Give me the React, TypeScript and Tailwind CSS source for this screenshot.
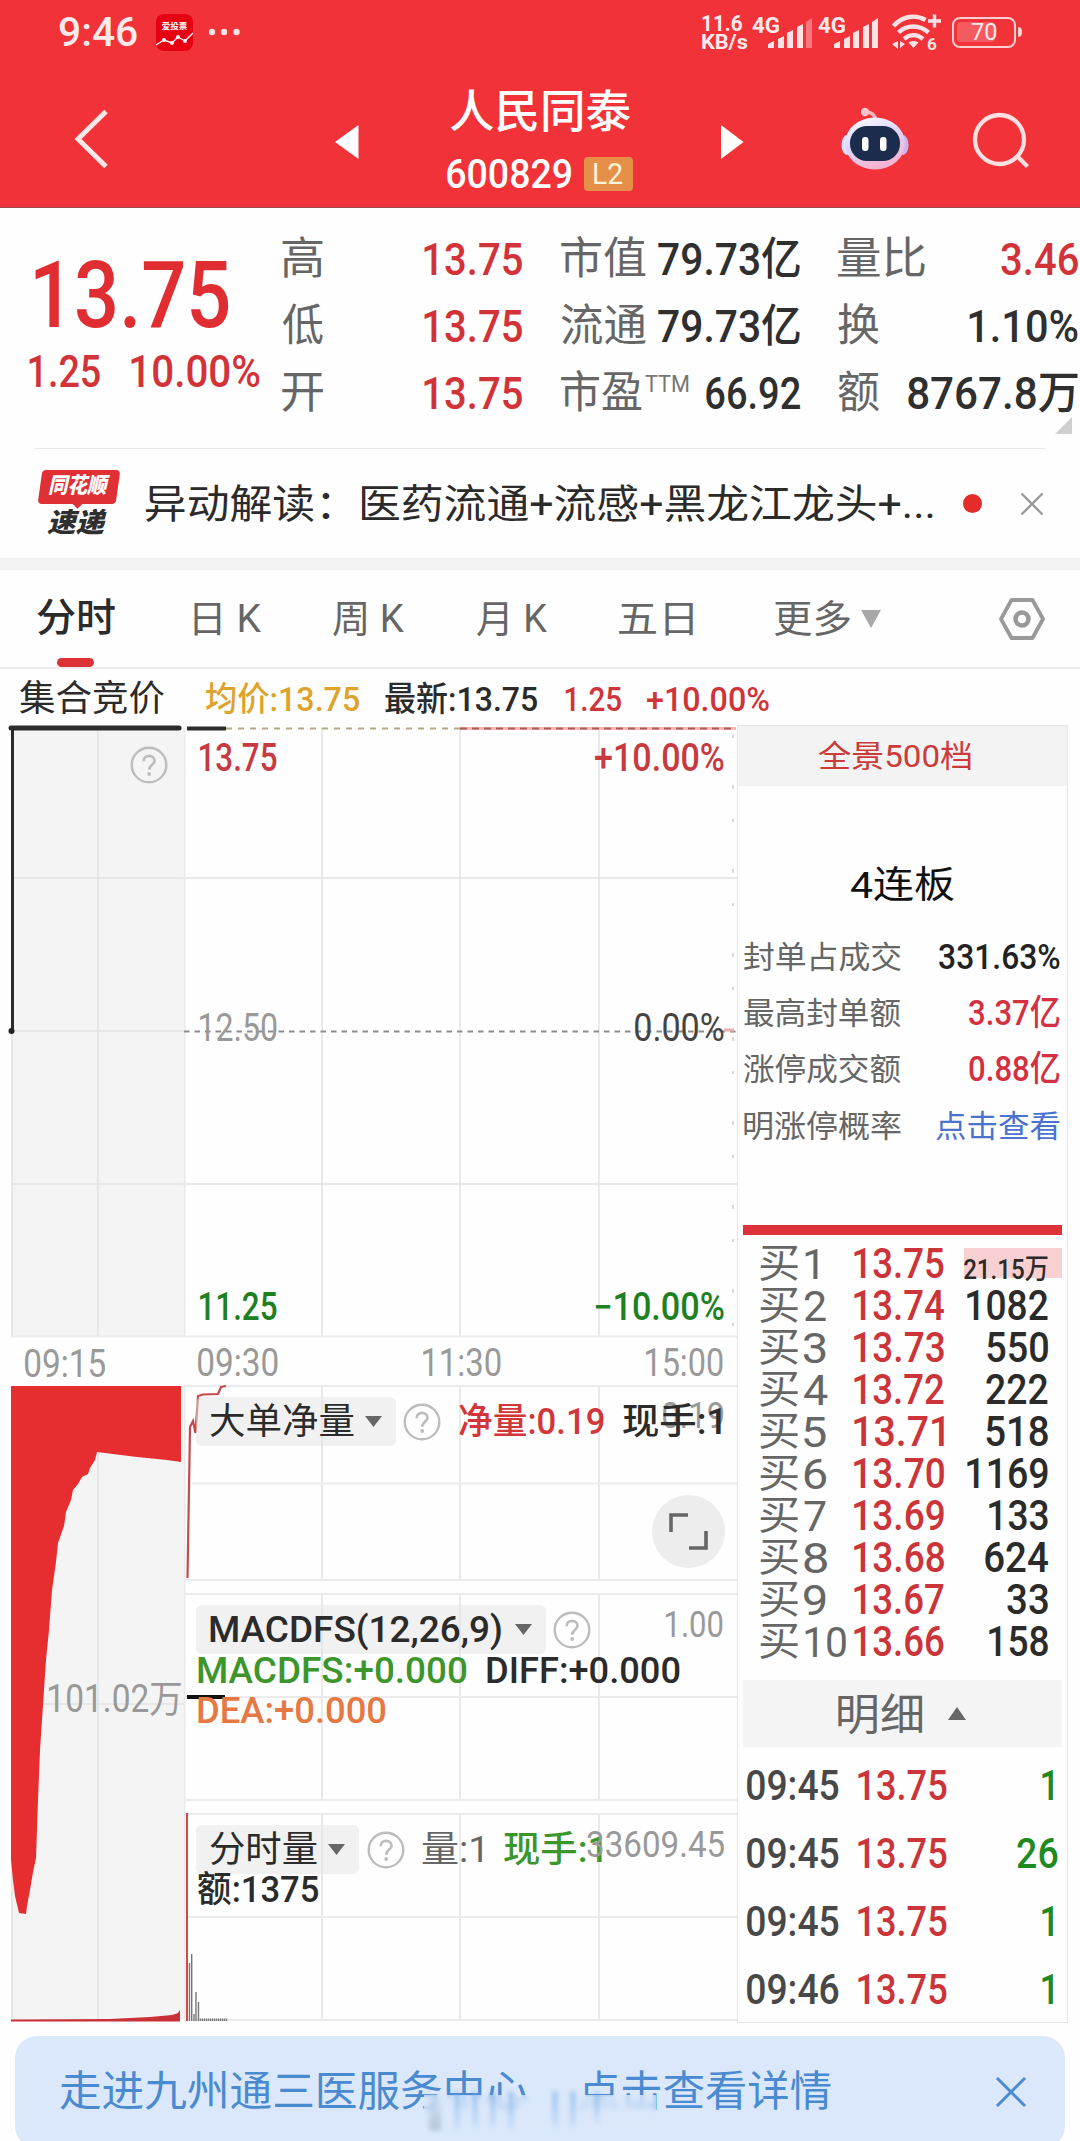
import { useLayoutEffect, useRef } from "react";
import type { ReactNode } from "react";

/* Text whose inked width is fitted to the box it stands in, giving condensed figures. */
function Fit({ children, className = "" }: { children: string; className?: string }) {
  const box = useRef<HTMLSpanElement>(null);
  const ink = useRef<HTMLSpanElement>(null);
  useLayoutEffect(() => {
    const b = box.current;
    const t = ink.current;
    if (!b || !t) return;
    const s = getComputedStyle(t);
    const ctx = document.createElement("canvas").getContext("2d");
    if (!ctx) return;
    ctx.font = `${s.fontStyle} ${s.fontWeight} ${s.fontSize} ${s.fontFamily}`;
    const m = ctx.measureText(children);
    const k = b.clientWidth / (m.actualBoundingBoxLeft + m.actualBoundingBoxRight);
    t.style.transform = `translateX(${m.actualBoundingBoxLeft * k}px) scaleX(${k})`;
  }, [children]);
  return (
    <span ref={box} className={`block shrink-0 leading-none ${className}`}>
      <span ref={ink} className="block w-max origin-left whitespace-pre">
        {children}
      </span>
    </span>
  );
}

function Help({ className = "" }: { className?: string }) {
  return (
    <svg className={`size-[38px] shrink-0 ${className}`} viewBox="0 0 38 38" fill="none" stroke="#bdbdbd" strokeWidth="2.4">
      <circle cx="19" cy="19" r="17.3" />
      <path d="M13.6 15.2c0-3.4 2.4-5.4 5.5-5.4s5.4 2 5.4 4.9c0 4-5.3 4.4-5.3 9" strokeWidth="2.7" />
      <circle cx="19.2" cy="28" r="1.9" fill="#bdbdbd" stroke="none" />
    </svg>
  );
}

function Down({ className = "" }: { className?: string }) {
  return (
    <svg className={`h-[11px] w-[17px] shrink-0 ${className}`} viewBox="0 0 17 11">
      <path d="M0 0h17L8.500 11z" fill="#666" />
    </svg>
  );
}

function Signal({ weak = false, className = "" }: { weak?: boolean; className?: string }) {
  return (
    <div className={`relative h-[34px] w-[61px] shrink-0 ${className}`}>
      <Fit className="w-[27px] text-[22px] font-bold">4G</Fit>
      <svg className="absolute top-0 left-[16px] h-[34px] w-[46px]" viewBox="0 0 46 34" fill="#ffe3e4">
        <path d="M0 33v-4l6-3v7z" />
        <path d="M10 33V24l6-3v12z" />
        <path d="M19 33V18l6-3v18z" />
        <path d="M29 33V12l6-3v24z" />
        <path d="M38 33V7l6-4v30z" opacity={weak ? 0.4 : 1} />
      </svg>
    </div>
  );
}

function StatusBar() {
  return (
    <div className="flex h-16 items-center pl-[59px] text-[#ffe9ea]">
      <Fit className="w-[78px] text-[41px] font-medium">9:46</Fit>
      <svg className="ml-[19px] size-[37px]" viewBox="0 0 37 37">
        <rect width="37" height="37" rx="8" fill="#e60012" />
        <text x="18.500" y="15" textAnchor="middle" fontSize="8.500" fontWeight="700" fill="#fff" fontFamily="Noto Sans CJK SC">爱投票</text>
        <path d="M0 31l8-5 8 3 6-6 7 4 8-8" fill="none" stroke="#fff" strokeWidth="1.400" />
        <g fill="#fff"><circle cx="8" cy="26" r="1.900" /><circle cx="16" cy="29" r="1.900" /><circle cx="22" cy="23" r="1.900" /><circle cx="29" cy="27" r="1.900" /></g>
      </svg>
      <svg className="ml-[14px] h-[8px] w-[34px]" viewBox="0 0 34 8" fill="#ffe3e4">
        <circle cx="5" cy="4" r="3.200" /><circle cx="17" cy="4" r="3.200" /><circle cx="29.500" cy="4" r="3.200" />
      </svg>
      <div className="ml-[461px] flex w-[50px] flex-col pt-px">
        <Fit className="h-[19px] w-[40px] text-[22px] font-bold">11.6</Fit>
        <Fit className="w-[46px] text-[21px] font-bold">KB/s</Fit>
      </div>
      <Signal weak />
      <Signal className="ml-[5px]" />
      <svg className="ml-[12px] h-[38px] w-[52px]" viewBox="0 0 52 38" fill="none" stroke="#ffe3e4" strokeWidth="4.400">
        <path d="M2.500 13c9-10 22-12 32-6" />
        <path d="M7.500 19.500c8-8 21-8 30 0" />
        <path d="M13 26c6-5 13-5 19 0" />
        <path d="M22.500 35l-5-5.500c3-2 7-2 10 0z" fill="#ffe3e4" stroke="none" />
        <path d="M37 8h13M43.500 1.500v13" strokeWidth="3.400" />
        <path d="M1 31l6-3v8zM9 35v-7l5 3" fill="#ffe3e4" stroke="none" />
        <text x="36" y="37" fontSize="17" fontWeight="700" fill="#ffe3e4" stroke="none" fontFamily="Roboto">6</text>
      </svg>
      <div className="relative ml-[9px] flex h-[31px] w-[64px] items-center justify-center rounded-[8px] border-[2.5px] border-[#ffd0d2]">
        <span className="absolute top-[3px] left-[3px] h-[20px] w-[38px] rounded-[4px] bg-white/20" />
        <Fit className="relative w-[26px] text-[24px]">70</Fit>
      </div>
      <span className="ml-[2px] h-[10px] w-[4px] rounded-r bg-[#ffd0d2]" />
    </div>
  );
}

function NavBar() {
  return (
    <div className="flex h-36 items-center text-white">
      <svg className="ml-[72px] h-[64px] w-[38px] translate-y-[3px]" viewBox="0 0 38 64" fill="none" stroke="#ffe6e7" strokeWidth="5">
        <path d="M34 4.500L6 32l28 27.500" />
      </svg>
      <svg className="ml-[225px] h-[34px] w-[24px] translate-y-[6px]" viewBox="0 0 24 34"><path d="M23.500 0v34L0 17z" fill="#fff" /></svg>
      <div className="ml-[88px] flex w-[188px] flex-col items-start pt-[12px]">
        <Fit className="ml-[3px] w-[180px] text-[45px] font-medium">人民同泰</Fit>
        <div className="mt-[19px] flex items-center">
          <Fit className="w-[124px] text-[41px] font-medium">600829</Fit>
          <div className="ml-[13px] flex h-[34px] w-[49px] items-center justify-center rounded-[4px] bg-[#e58f48]">
            <Fit className="w-[29px] text-[29px] text-[#fff4d8]">L2</Fit>
          </div>
        </div>
      </div>
      <svg className="ml-[86px] h-[34px] w-[23px] translate-y-[6px]" viewBox="0 0 23 34"><path d="M0 0v34l22.500-17z" fill="#fff" /></svg>
      <svg className="ml-[97px] h-[64px] w-[68px] translate-y-[3px]" viewBox="0 0 68 64">
        <defs>
          <linearGradient id="shell" x1="0" y1="0" x2=".4" y2="1">
            <stop offset="0" stopColor="#fff" /><stop offset=".5" stopColor="#dcd8fb" /><stop offset="1" stopColor="#f5b4d2" />
          </linearGradient>
        </defs>
        <path d="M24 5c6 0 10 2 10.500 8" fill="none" stroke="#ffb6bf" strokeWidth="3.500" />
        <circle cx="24" cy="5" r="4.200" fill="#ffc3ca" />
        <ellipse cx="6" cy="38" rx="5.500" ry="10" fill="#dfe3ff" />
        <ellipse cx="62" cy="38" rx="5.500" ry="10" fill="#c3b7f4" />
        <ellipse cx="34" cy="36.500" rx="30" ry="26" fill="url(#shell)" />
        <rect x="9" y="19" width="50" height="35" rx="17" fill="#1c2c4c" />
        <rect x="21" y="30" width="6.500" height="14" rx="3" fill="#fff" />
        <rect x="39" y="30" width="6.500" height="14" rx="3" fill="#fff" />
      </svg>
      <svg className="ml-[63px] h-[58px] w-[60px] translate-y-[5px]" viewBox="0 0 60 58" fill="none" stroke="#ffdfe0" strokeWidth="4.300">
        <circle cx="27.500" cy="27.500" r="24.500" />
        <path d="M45.500 44.500l10 10" />
      </svg>
    </div>
  );
}

function Pair({ label, value, className, children }: { label: [string, string]; value: [string, string]; className: string; children?: ReactNode }) {
  return (
    <div className={`flex shrink-0 items-center ${className}`}>
      <Fit className={`mt-[2px] text-[44px] text-[#666] ${label[1]}`}>{label[0]}</Fit>
      {children}
      <Fit className={`mt-[3px] ml-auto text-[45px] font-medium ${value[1]}`}>{value[0]}</Fit>
    </div>
  );
}

function Quote() {
  const red = "text-[#d23338]";
  const ink = "text-[#2f2f2f]";
  return (
    <section className="relative flex h-[240px] shrink-0">
      <div className={`w-[282px] pt-[41px] ${red}`}>
        <Fit className="ml-[35px] w-[194px] text-[93px] font-medium text-[#e02d31]">13.75</Fit>
        <div className="mt-[7px] flex pl-[29px] font-medium">
          <Fit className="w-[71px] text-[45px]">1.25</Fit>
          <Fit className="ml-[31px] w-[129px] text-[45px]">10.00%</Fit>
        </div>
      </div>
      <div className="pt-[16px]">
        <div className="flex h-[67px] items-center">
          <Pair className="w-[240px]" label={["高", "w-[41px]"]} value={["13.75", `w-[98px] ${red}`]} />
          <Pair className="ml-[39px] w-[239px]" label={["市值", "w-[85px]"]} value={["79.73亿", `w-[142px] ${ink}`]} />
          <Pair className="ml-[38px] w-[240px]" label={["量比", "w-[87px]"]} value={["3.46", `w-[77px] ${red}`]} />
        </div>
        <div className="flex h-[67px] items-center">
          <Pair className="w-[240px]" label={["低", "w-[41px]"]} value={["13.75", `w-[98px] ${red}`]} />
          <Pair className="ml-[39px] w-[239px]" label={["流通", "w-[85px]"]} value={["79.73亿", `w-[142px] ${ink}`]} />
          <Pair className="ml-[38px] w-[240px]" label={["换", "w-[41px]"]} value={["1.10%", `w-[109px] ${ink}`]} />
        </div>
        <div className="flex h-[67px] items-center">
          <Pair className="w-[240px]" label={["开", "w-[41px]"]} value={["13.75", `w-[98px] ${red}`]} />
          <Pair className="ml-[39px] w-[239px]" label={["市盈", "w-[81px]"]} value={["66.92", `w-[94px] ${ink}`]}>
            <Fit className="mb-[14px] ml-[3px] w-[44px] text-[23px] text-[#777]">TTM</Fit>
          </Pair>
          <Pair className="ml-[38px] w-[240px]" label={["额", "w-[41px]"]} value={["8767.8万", `w-[170px] ${ink}`]} />
        </div>
      </div>
      <svg className="absolute right-[8px] bottom-[14px] size-[17px]" viewBox="0 0 17 17"><path d="M17 0v17H0z" fill="#cfcfcf" /></svg>
    </section>
  );
}

function News() {
  return (
    <section className="flex h-[109px] shrink-0 items-center pl-[38px]">
      <div className="w-[82px]">
        <div className="relative mx-[2px] h-[34px]">
          <span className="absolute inset-0 -skew-x-[8deg] rounded-[4px] bg-[#de3035]" />
          <span className="absolute bottom-[-3px] left-[33px] size-[9px] rotate-45 bg-[#de3035]" />
          <Fit className="relative ml-[8px] w-[62px] pt-[5px] text-[22px] font-black text-white italic">同花顺</Fit>
        </div>
        <Fit className="mt-[6px] ml-[9px] w-[60px] text-[27px] font-black text-[#2f2f2f] italic">速递</Fit>
      </div>
      <Fit className="mt-[3px] ml-[26px] w-[787px] text-[40px] text-[#2b2b2b]">异动解读：医药流通+流感+黑龙江龙头+...</Fit>
      <span className="ml-[30px] size-[19px] rounded-full bg-[#e62b2b]" />
      <svg className="ml-[38px] size-[24px]" viewBox="0 0 24 24" stroke="#999" strokeWidth="2.400"><path d="M1.500 1.500l21 21M22.500 1.500l-21 21" /></svg>
    </section>
  );
}

function Tabs() {
  return (
    <nav className="flex h-[99px] shrink-0 items-center border-b-2 border-[#ececec] text-[38px] text-[#666]">
      <div className="relative ml-[37px]">
        <Fit className="w-[78px] text-[39px] font-medium text-[#2b2b2b]">分时</Fit>
        <span className="absolute top-[59px] left-[20px] h-[9px] w-[37px] rounded-full bg-[#dc3236]" />
      </div>
      <Fit className="ml-[79px] w-[67px]">日 K</Fit>
      <Fit className="ml-[72px] w-[71px]">周 K</Fit>
      <Fit className="ml-[73px] w-[70px]">月 K</Fit>
      <Fit className="ml-[72px] w-[74px]">五日</Fit>
      <Fit className="ml-[81px] w-[76px]">更多</Fit>
      <svg className="ml-[11px] h-[18px] w-[20px]" viewBox="0 0 20 18"><path d="M0 0h20L10 18z" fill="#a8a8a8" /></svg>
      <svg className="ml-[118px] h-[44px] w-[46px]" viewBox="0 0 46 44" fill="none" stroke="#999" strokeWidth="3.800" strokeLinejoin="round">
        <path d="M12.500 3h21L44 22 33.500 41h-21L2 22z" />
        <circle cx="23" cy="22" r="6.500" strokeWidth="4.500" />
      </svg>
    </nav>
  );
}

function Legend() {
  return (
    <div className="flex h-[56px] shrink-0 items-center pt-[4px] pl-[20px] text-[34px] text-[#2b2b2b]">
      <Fit className="w-[144px] text-[36px]">集合竞价</Fit>
      <Fit className="ml-[42px] w-[153px] font-medium text-[#dda32c]">均价:13.75</Fit>
      <Fit className="ml-[26px] w-[152px] font-medium">最新:13.75</Fit>
      <Fit className="ml-[28px] w-[56px] font-medium text-[#cf3439]">1.25</Fit>
      <Fit className="ml-[26px] w-[122px] font-medium text-[#cf3439]">+10.00%</Fit>
    </div>
  );
}

const tailBars = [200.5, 202.5, 204.5, 206.5, 208.5, 210.5, 212.5, 214.5, 216.5, 218.5, 220.5, 222.5, 224.5, 226.5];

function Plot() {
  return (
    <svg className="absolute inset-0 h-[1298px] w-[740px]" viewBox="0 725 740 1298" fill="none">
      <rect x="11" y="728" width="172" height="608" fill="#f4f4f4" />
      <rect x="11" y="1386" width="172" height="634" fill="#f4f4f4" />
      <g stroke="#e2e2e2" strokeWidth="1.400">
        <path d="M12 728V1336M98 728V1336M322 728V1336M460 728V1336M599 728V1336" />
        <path d="M12 878H737M12 1031H184M12 1184H737" />
        <path d="M98 1386V2020M12 1704H184M12 1386V2020" />
        <path d="M322 1386V1580M460 1386V1580M599 1386V1580M322 1594V1800M460 1594V1800M599 1594V1800M322 1814V2020M460 1814V2020M599 1814V2020" />
      </g>
      <g stroke="#ebebeb" strokeWidth="2.200">
        <path d="M184.500 728V1336M184.500 1386V2020M11 1336.500H737" />
        <path d="M184 1386H737M192 1483.500H737M184 1580H737M184 1594H737M184 1697H737M184 1800H737M184 1814H737M184 1917H737M184 2020H737" />
      </g>
      <path d="M184 1031.500H737" stroke="#8c8c8c" strokeWidth="1.800" strokeDasharray="5.500 5" />
      <path d="M226 728.500H460" stroke="#b5aa80" strokeWidth="2" strokeDasharray="6 6" />
      <path d="M460 728.500H736" stroke="#f2b8b6" strokeWidth="3" />
      <path d="M460 728.500H736" stroke="#b05a58" strokeWidth="1.800" strokeDasharray="7 5" />
      <path d="M733 735V1330" stroke="#ccc" strokeWidth="1.500" strokeDasharray="3 47 4 30" />
      <path d="M724 1030H734" stroke="#e8b0b0" strokeWidth="3" />
      <path d="M11 728H179" stroke="#2c2c2c" strokeWidth="5" strokeLinecap="round" />
      <path d="M187 728.500H226" stroke="#2c2c2c" strokeWidth="4" />
      <path d="M12.500 728V1030" stroke="#2c2c2c" strokeWidth="3" />
      <circle cx="11.500" cy="1031" r="3" fill="#222" />
      <path d="M11 1386H181V1462L167 1460 137 1457 97 1452 95 1460 90 1468 88 1474 82 1477 78 1484 73 1490 71 1500 66 1512 64 1526 58 1543 56 1562 52 1590 49 1630 46 1660 44 1690 40 1750 38 1800 36 1858 33 1872 30 1890 27 1906 26 1914 19 1913 15 1896 13 1880 11 1860z" fill="#e62e31" />
      <path d="M11 2021.500V2019.500L110 2019 150 2017 172 2015 178 2013 180 2010V2021.500z" fill="#c93038" />
      <path d="M187.500 1578L190 1427 193 1421 195.500 1433 198 1396 203 1394.500 218 1394 221 1387 226 1386" stroke="#c44a4e" strokeWidth="2.200" />
      <path d="M187 1697H225" stroke="#111" strokeWidth="4" />
      <path d="M187 1813V2021" stroke="#d64448" strokeWidth="2" />
      <g stroke="#777" strokeWidth="1.400">
        <path d="M189.500 1963V2021M191.700 1954V2021M194 2014V2021M196 1992V2021M198.500 2002V2021" />
        {tailBars.map((x) => <path key={x} d={`M${x} 2018.500V2021`} />)}
      </g>
    </svg>
  );
}

function Charts() {
  return (
    <div className="relative w-[737px] shrink-0 text-[38px] text-[#999]">
      <Plot />
      <Help className="absolute top-[21px] left-[130px]" />
      <Fit className="absolute top-[14px] left-[200px] w-[77px] font-medium text-[#c73a40]">13.75</Fit>
      <Fit className="absolute top-[14px] left-[595px] w-[129px] font-medium text-[#c73a40]">+10.00%</Fit>
      <Fit className="absolute top-[284px] left-[200px] w-[77px]">12.50</Fit>
      <Fit className="absolute top-[284px] left-[635px] w-[89px] text-[#444]">0.00%</Fit>
      <Fit className="absolute top-[563px] left-[200px] w-[77px] font-medium text-[#1d8021]">11.25</Fit>
      <Fit className="absolute top-[563px] left-[595px] w-[129px] font-medium text-[#1d8021]">−10.00%</Fit>
      <Fit className="absolute top-[620px] left-[25px] w-[80px]">09:15</Fit>
      <Fit className="absolute top-[619px] left-[198px] w-[80px]">09:30</Fit>
      <Fit className="absolute top-[619px] left-[423px] w-[78px]">11:30</Fit>
      <Fit className="absolute top-[619px] left-[646px] w-[77px]">15:00</Fit>
      <Fit className="absolute top-[955px] left-[49px] w-[132px]">101.02万</Fit>

      <Fit className="absolute top-[673px] left-[663px] w-[60px] text-[36px]">0.19</Fit>
      <div className="absolute top-[672px] left-[196px] flex h-[49px] items-center text-[36px] text-[#2b2b2b]">
        <div className="flex h-[49px] w-[200px] items-center rounded-[6px] bg-[#e4e4e4]/50 pl-[14px]">
          <Fit className="w-[144px]">大单净量</Fit>
          <Down className="ml-[11px]" />
        </div>
        <Help className="ml-[7px]" />
        <Fit className="ml-[18px] w-[145px] font-medium text-[#d2363a]">净量:0.19</Fit>
        <Fit className="ml-[19px] w-[98px] font-medium">现手:1</Fit>
      </div>
      <div className="absolute top-[770px] left-[652px] flex size-[73px] items-center justify-center rounded-full bg-[#ededed]">
        <svg className="size-[39px]" viewBox="0 0 39 39" fill="none" stroke="#666" strokeWidth="3.600"><path d="M2 20V3h17M37 19v17H20" /></svg>
      </div>

      <Fit className="absolute top-[882px] left-[666px] w-[57px] text-[36px]">1.00</Fit>
      <div className="absolute top-[880px] left-[196px] flex h-[49px] items-center text-[#2b2b2b]">
        <div className="flex h-[49px] w-[350px] items-center rounded-[6px] bg-[#e4e4e4]/50 pl-[14px]">
          <Fit className="w-[291px] text-[37px] font-medium">MACDFS(12,26,9)</Fit>
          <Down className="ml-[14px]" />
        </div>
        <Help className="ml-[7px]" />
      </div>
      <div className="absolute top-[927px] left-[198px] flex text-[37px] font-medium">
        <Fit className="w-[269px] text-[#3c962c]">MACDFS:+0.000</Fit>
        <Fit className="ml-[20px] w-[193px] text-[#2b2b2b]">DIFF:+0.000</Fit>
      </div>
      <Fit className="absolute top-[967px] left-[198px] w-[188px] text-[37px] font-medium text-[#e57843]">DEA:+0.000</Fit>

      <div className="absolute top-[1100px] left-[196px] flex h-[49px] items-center text-[36px] text-[#2b2b2b]">
        <div className="flex h-[49px] w-[163px] items-center rounded-[6px] bg-[#e4e4e4]/50 pl-[14px]">
          <Fit className="w-[107px]">分时量</Fit>
          <Down className="ml-[11px]" />
        </div>
        <Help className="ml-[8px]" />
        <Fit className="ml-[17px] w-[60px] text-[#666]">量:1</Fit>
        <Fit className="ml-[22px] w-[98px] font-medium text-[#3c962c]">现手:1</Fit>
      </div>
      <Fit className="absolute top-[1102px] left-[587px] w-[137px] text-[36px]">33609.45</Fit>
      <Fit className="absolute top-[1147px] left-[198px] w-[120px] text-[36px] font-medium text-[#2b2b2b]">额:1375</Fit>
    </div>
  );
}

const stats = [
  { label: "封单占成交", value: "331.63%", tone: "w-[121px] text-[35px] font-medium text-[#222]" },
  { label: "最高封单额", value: "3.37亿", tone: "w-[91px] text-[35px] font-medium text-[#d4303f]" },
  { label: "涨停成交额", value: "0.88亿", tone: "w-[91px] text-[35px] font-medium text-[#d4303f]" },
  { label: "明涨停概率", value: "点击查看", tone: "w-[124px] text-[31px] text-[#4a72cf]" },
];

const bids = [
  { n: "1", nw: "w-[13px]", price: "13.75", qty: "21.15万", qw: "w-[84px] text-[28px] pt-[12px]" },
  { n: "2", nw: "w-[22px]", price: "13.74", qty: "1082", qw: "w-[81px] text-[42px]" },
  { n: "3", nw: "w-[22px]", price: "13.73", qty: "550", qw: "w-[61px] text-[42px]" },
  { n: "4", nw: "w-[24px]", price: "13.72", qty: "222", qw: "w-[62px] text-[42px]" },
  { n: "5", nw: "w-[22px]", price: "13.71", qty: "518", qw: "w-[62px] text-[42px]" },
  { n: "6", nw: "w-[23px]", price: "13.70", qty: "1169", qw: "w-[81px] text-[42px]" },
  { n: "7", nw: "w-[22px]", price: "13.69", qty: "133", qw: "w-[59px] text-[42px]" },
  { n: "8", nw: "w-[23px]", price: "13.68", qty: "624", qw: "w-[63px] text-[42px]" },
  { n: "9", nw: "w-[22px]", price: "13.67", qty: "33", qw: "w-[41px] text-[42px]" },
  { n: "10", nw: "w-[41px]", price: "13.66", qty: "158", qw: "w-[59px] text-[42px]" },
];

const trades = [
  { time: "09:45", qty: "1", qw: "mr-[14px] w-[11px]" },
  { time: "09:45", qty: "26", qw: "mr-[9px] w-[41px]" },
  { time: "09:45", qty: "1", qw: "mr-[14px] w-[11px]" },
  { time: "09:46", qty: "1", qw: "mr-[14px] w-[11px]" },
];

function Depth() {
  return (
    <aside className="h-[1298px] w-[331px] border border-[#e6e6e6]">
      <div className="flex h-[60px] items-center justify-center bg-[#f3f3f3] pr-[17px]">
        <Fit className="w-[153px] text-[31px] text-[#cc3b3a]">全景500档</Fit>
      </div>
      <div className="flex h-[143px] items-end pb-[25px] pl-[112px]">
        <Fit className="w-[104px] text-[37px] text-[#111]">4连板</Fit>
      </div>
      <div className="pr-[7px] pl-[6px]">
        {stats.map((s) => (
          <div key={s.label} className="flex h-[56.300px] items-center justify-between">
            <Fit className="w-[157px] text-[31px] text-[#666]">{s.label}</Fit>
            <Fit className={s.tone}>{s.value}</Fit>
          </div>
        ))}
      </div>
      <div className="mt-[71px] mr-[5px] ml-[5px] h-[10px] bg-[#dc3238]" />
      <div className="mt-[8px] pr-[5px] pl-[22px]">
        {bids.map((b) => (
          <div key={b.n} className="relative flex h-[42px] items-center">
            {b.n === "1" && <span className="absolute top-[5px] right-0 h-[30px] w-[98px] bg-[#f8d0d1]" />}
            <Fit className="w-[38px] text-[40px] text-[#666]">买</Fit>
            <Fit className={`text-[43px] text-[#666] ${b.nw} ${b.n === "1" || b.n === "10" ? "ml-[7px]" : "ml-[6px]"}`}>{b.n}</Fit>
            <Fit className="absolute left-[94px] w-[90px] text-[42px] font-medium text-[#cb3439]">{b.price}</Fit>
            <Fit className={`relative mr-[14px] ml-auto font-medium text-[#2b2b2b] ${b.qw}`}>{b.qty}</Fit>
          </div>
        ))}
      </div>
      <div className="mt-[17px] mr-[5px] ml-[5px] flex h-[67px] items-center bg-[#f4f4f4] pt-[3px] pl-[95px]">
        <Fit className="w-[84px] text-[43px] text-[#666]">明细</Fit>
        <svg className="mb-[4px] ml-[26px] h-[13px] w-[18px]" viewBox="0 0 18 13"><path d="M0 13h18L9 0z" fill="#666" /></svg>
      </div>
      <div className="pt-[5px] pl-[9px]">
        {trades.map((t, i) => (
          <div key={i} className="flex h-[68px] items-center text-[42px] font-medium">
            <Fit className="w-[92px] text-[#484848]">{t.time}</Fit>
            <Fit className="ml-[19px] w-[89px] text-[#cb3439]">{"13.75"}</Fit>
            <Fit className={`ml-auto text-[#1f8a22] ${t.qw}`}>{t.qty}</Fit>
          </div>
        ))}
      </div>
    </aside>
  );
}

function Promo() {
  return (
    <div className="relative mt-[13px] ml-[15px] flex h-[112px] w-[1050px] shrink-0 items-center rounded-[22px] bg-[#dbe8fb] pl-[45px] text-[42px] text-[#4a8ad0]">
      <Fit className="w-[467px]">走进九州通三医服务中心</Fit>
      <Fit className="ml-[52px] w-[252px]">点击查看详情</Fit>
      <svg className="ml-[164px] size-[32px]" viewBox="0 0 32 32" stroke="#4a8ad0" strokeWidth="3"><path d="M2 2l28 28M30 2L2 30" /></svg>
      <div className="absolute top-[59px] left-[409px] h-[34px] w-[232px] bg-[#dbe8fb]/70 backdrop-blur-[3px]" />
      <div className="absolute top-[56px] left-[414px] flex gap-[14px] opacity-70 blur-[2.5px]">
        <span className="h-[38px] w-[12px] bg-gradient-to-b from-transparent to-[#a3b4ca]" />
        <span className="h-[36px] w-[4px] bg-gradient-to-b from-[#5d9fe0] to-[#b9d8f8]" />
        <span className="h-[36px] w-[4px] bg-gradient-to-b from-[#5d9fe0] to-[#b9d8f8]" />
        <span className="h-[36px] w-[4px] bg-gradient-to-b from-[#5d9fe0] to-[#b9d8f8]" />
        <span className="h-[36px] w-[4px] bg-gradient-to-b from-[#5d9fe0] to-[#b9d8f8]" />
        <span className="ml-[26px] h-[36px] w-[4px] bg-gradient-to-b from-[#5d9fe0] to-[#b9d8f8]" />
        <span className="h-[36px] w-[4px] bg-gradient-to-b from-[#5d9fe0] to-[#b9d8f8]" />
        <span className="ml-[6px] h-[32px] w-[4px] bg-gradient-to-b from-[#5d9fe0] to-[#c9e0f8]" />
      </div>
    </div>
  );
}

export default function App() {
  return (
    <div className="flex h-[2141px] w-[1080px] flex-col overflow-hidden bg-[#fefefe] font-[Roboto,'Noto_Sans_CJK_SC',sans-serif]">
      <header className="h-[208px] shrink-0 border-b border-[#9a4a50] bg-[#f23239]">
        <StatusBar />
        <NavBar />
      </header>
      <Quote />
      <div className="mr-[35px] ml-[35px] h-px shrink-0 bg-[#e9e9e9]" />
      <News />
      <div className="h-[12px] shrink-0 bg-[#f3f3f3]" />
      <Tabs />
      <Legend />
      <main className="flex h-[1298px] shrink-0">
        <Charts />
        <Depth />
      </main>
      <Promo />
    </div>
  );
}
